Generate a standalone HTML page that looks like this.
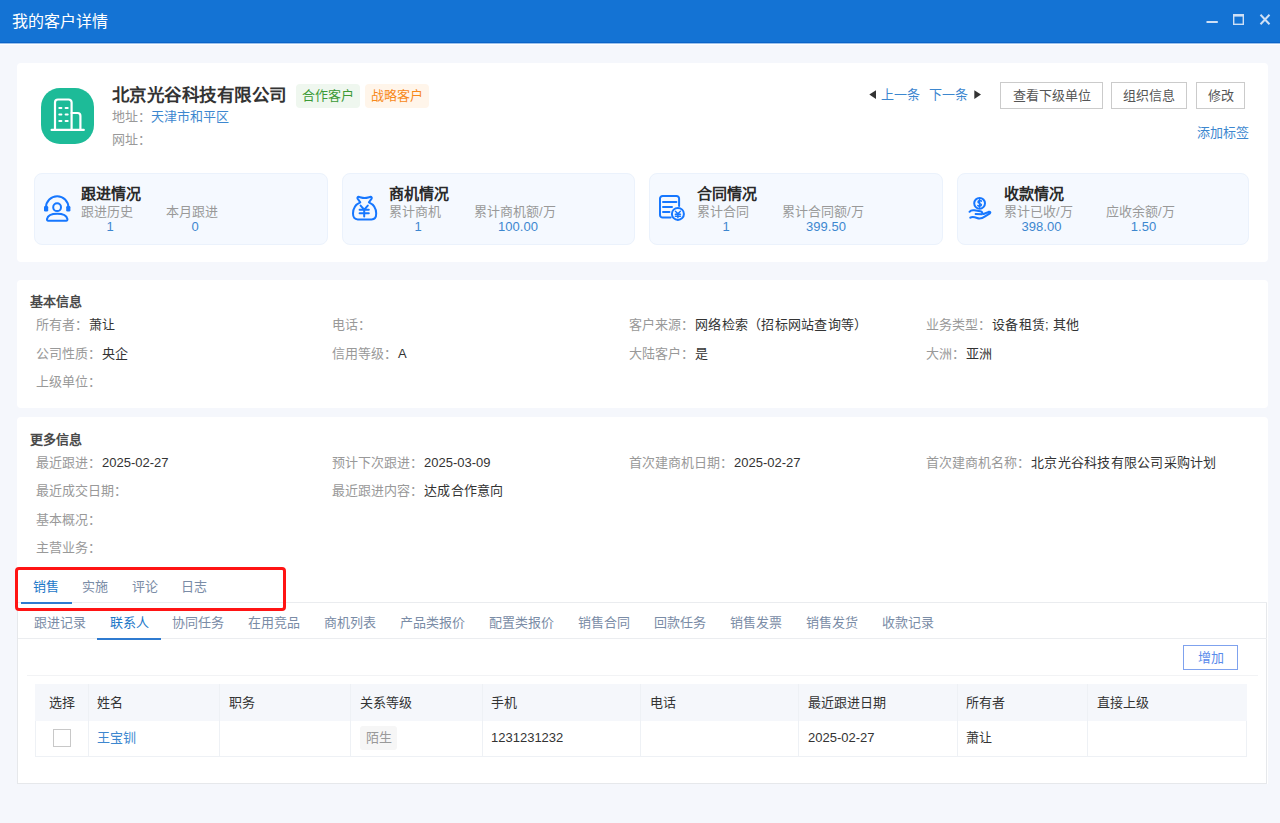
<!DOCTYPE html>
<html lang="zh-CN"><head><meta charset="utf-8">
<style>
*{margin:0;padding:0;box-sizing:border-box;}
html,body{width:1280px;height:823px;overflow:hidden;background:#F5F7FC;font-family:"Liberation Sans",sans-serif;color:#333;}
.a{position:absolute;white-space:nowrap;}
.hdr{position:absolute;left:0;top:0;width:1280px;height:43px;background:#1473D4;border-bottom:1px solid #0A64C8;}
.hdr .t{position:absolute;left:12px;top:12px;font-size:16px;color:#fff;line-height:20px;}
.card{position:absolute;background:#fff;border-radius:4px;}
.stat{position:absolute;top:173px;width:293px;height:72px;background:#F5F9FF;border:1px solid #EBF2FC;border-radius:8px;}
.stat .tt{position:absolute;left:46px;top:10px;font-size:15px;font-weight:bold;color:#2a2a2a;line-height:20px;}
.stat .lb{position:absolute;top:30px;font-size:13px;color:#999;line-height:16px;}
.stat .vl{position:absolute;top:45px;font-size:13px;color:#3D87CF;line-height:16px;text-align:center;}
.stat svg{position:absolute;left:9px;top:21px;overflow:visible;}
.btn{position:absolute;top:82px;height:27px;border:1px solid #CBCBCB;background:#fff;font-size:13px;color:#555;line-height:25px;text-align:center;}
.sec{position:absolute;left:30px;font-size:13px;font-weight:bold;color:#4a4a4a;line-height:16px;}
.f{position:absolute;font-size:13px;line-height:16px;color:#999;white-space:nowrap;}
.f b{font-weight:normal;color:#333;margin-left:1px;letter-spacing:0.25px;}
.f b.d{letter-spacing:0;}
.tab1{position:absolute;top:579px;font-size:13px;color:#7A8CA6;line-height:16px;}
.tab2{position:absolute;top:615px;font-size:13px;color:#7A8CA6;line-height:16px;}
.th{position:absolute;top:695px;font-size:13px;color:#333;line-height:16px;}
.td{position:absolute;top:730px;font-size:13px;color:#333;line-height:16px;}
</style></head>
<body>
<div class="hdr"><div class="t">我的客户详情</div>
<svg class="a" style="left:1200px;top:10px" width="80" height="22" viewBox="0 0 80 22">
<rect x="6.5" y="11" width="11.3" height="2" fill="#CFE0F5"/>
<rect x="33.7" y="4.7" width="9.6" height="9.6" fill="none" stroke="#CFE0F5" stroke-width="1.4"/>
<rect x="33" y="4" width="11" height="2.6" fill="#CFE0F5"/>
<path d="M60.5 4.8 L69.5 14.2 M69.5 4.8 L60.5 14.2" stroke="#CFE0F5" stroke-width="2" fill="none"/>
</svg>
</div>
<div style="position:absolute;left:0;top:43px;width:1280px;height:1px;background:#9DC2EC"></div><div style="position:absolute;left:0;top:44px;width:1280px;height:1px;background:#fff"></div>

<!-- card 1 -->
<div class="card" style="left:17px;top:63px;width:1251px;height:199px;"></div>
<svg class="a" style="left:41px;top:88px" width="53" height="56" viewBox="0 0 53 56">
<rect x="0" y="0" width="53" height="56" rx="19" fill="#1DBB98"/>
<g stroke="#fff" stroke-width="2.2" fill="none" stroke-linecap="round" stroke-linejoin="round">
<path d="M14 41.5 V14.5 a3 3 0 0 1 3 -3 H27.6 a3 3 0 0 1 3 3 V41.5"/>
<path d="M30.6 25 H36.6 a2.8 2.8 0 0 1 2.8 2.8 V41.5"/>
<path d="M10.6 41.9 H42.8"/>
<path d="M18.3 20 H20.4 M24.6 20 H26.7 M18.3 26.4 H20.4 M24.6 26.4 H26.7 M18.3 32.9 H20.4 M24.6 32.9 H26.7" stroke-width="2"/>
</g>
</svg>
<div class="a" style="left:112px;top:84px;font-size:17.5px;letter-spacing:0.45px;font-weight:bold;color:#333;line-height:22px;">北京光谷科技有限公司</div>
<div class="a" style="left:296px;top:84px;width:64px;height:24px;background:#EFF7EF;border-radius:4px;font-size:13px;color:#3C9A36;line-height:24px;text-align:center;">合作客户</div>
<div class="a" style="left:365px;top:84px;width:64px;height:24px;background:#FFF5EA;border-radius:4px;font-size:13px;color:#F7891A;line-height:24px;text-align:center;">战略客户</div>
<div class="f" style="left:112px;top:109px;">地址：<span style="color:#3D87CF">天津市和平区</span></div>
<div class="f" style="left:112px;top:132px;">网址：</div>

<svg class="a" style="left:869px;top:90px" width="8" height="10"><path d="M0.3 4.6 L7 0.3 V9Z" fill="#333"/></svg>
<div class="a" style="left:881px;top:87px;font-size:13px;color:#3D87CF;line-height:16px;">上一条</div>
<div class="a" style="left:929px;top:87px;font-size:13px;color:#3D87CF;line-height:16px;">下一条</div>
<svg class="a" style="left:974px;top:90px" width="8" height="10"><path d="M7 4.6 L0.3 0.3 V9Z" fill="#333"/></svg>
<div class="btn" style="left:1000px;width:103px;">查看下级单位</div>
<div class="btn" style="left:1111px;width:76px;">组织信息</div>
<div class="btn" style="left:1196px;width:49px;">修改</div>
<div class="a" style="left:1197px;top:125px;font-size:13px;color:#3D87CF;line-height:16px;">添加标签</div>

<div class="stat" style="left:34px;width:294px;">
<svg width="28" height="28" viewBox="0 0 28 28"><g fill="none" stroke="#1677FF" stroke-width="2" stroke-linecap="round" stroke-linejoin="round">
<path d="M2 12.5 A11.2 11.2 0 0 1 24.4 12.5"/>
<rect x="0" y="11" width="4.2" height="5.6" rx="1.3" fill="#1677FF" stroke="none"/><rect x="22.2" y="11" width="4.2" height="5.6" rx="1.3" fill="#1677FF" stroke="none"/>
<circle cx="13.1" cy="12.2" r="3.9"/>
<path d="M4.2 25.7 C3.2 25.7 2.8 25 3 24 C3.8 20.6 7.5 18.8 13.2 18.8 C18.9 18.8 22.6 20.6 23.4 24 C23.6 25 23.2 25.7 22.2 25.7 Z"/></g></svg>
<div class="tt">跟进情况</div>
<div class="lb" style="left:46px;">跟进历史</div><div class="lb" style="left:131px;">本月跟进</div>
<div class="vl" style="left:49px;width:52px;">1</div><div class="vl" style="left:134px;width:52px;">0</div>
</div>
<div class="stat" style="left:342px;">
<svg width="28" height="28" viewBox="0 0 28 28"><g fill="none" stroke="#1677FF" stroke-width="2" stroke-linejoin="round" stroke-linecap="round">
<path d="M8.3 7.3 L5.6 3.6 C5.1 2.8 5.6 1.8 6.6 1.8 C9 2.4 10.8 3 12.6 3 C14.4 3 16.2 2.4 18.6 1.8 C19.6 1.8 20.1 2.8 19.6 3.6 L16.9 7.3 C21.5 9.3 24.2 13.5 24.2 18.5 C24.2 22.5 22.5 24.4 19.5 24.4 H5.7 C2.7 24.4 1 22.5 1 18.5 C1 13.5 3.7 9.3 8.3 7.3 Z"/>
<path d="M8.6 10.6 L12.2 14.6 L15.8 10.6 M7.6 14.8 H16.8 M7.6 18.2 H16.8 M12.2 14.6 V21.6" stroke-width="2"/></g></svg>
<div class="tt">商机情况</div>
<div class="lb" style="left:46px;">累计商机</div><div class="lb" style="left:131px;">累计商机额/万</div>
<div class="vl" style="left:49px;width:52px;">1</div><div class="vl" style="left:134px;width:82px;">100.00</div>
</div>
<div class="stat" style="left:649px;width:294px;">
<svg style="left:10px" width="28" height="28" viewBox="0 0 28 28"><g fill="none" stroke="#1677FF" stroke-width="2" stroke-linecap="round" stroke-linejoin="round">
<path d="M10.6 22.6 H2.6 a2.6 2.6 0 0 1 -2.6 -2.6 V3.6 a2.6 2.6 0 0 1 2.6 -2.6 H16.5 a2.6 2.6 0 0 1 2.6 2.6 V10.9"/>
<path d="M3 6.9 H16.4 M3 12 H12 M3 16.9 H9.5"/>
<circle cx="17.9" cy="18.9" r="6"/>
<path d="M15.4 16.2 L17.9 18.8 L20.4 16.2 M15.3 19.3 H20.5 M15.3 21.2 H20.5 M17.9 18.8 V22.8" stroke-width="1.4"/></g></svg>
<div class="tt" style="left:47px">合同情况</div>
<div class="lb" style="left:47px;">累计合同</div><div class="lb" style="left:132px;">累计合同额/万</div>
<div class="vl" style="left:50px;width:52px;">1</div><div class="vl" style="left:135px;width:82px;">399.50</div>
</div>
<div class="stat" style="left:957px;width:292px;">
<svg width="28" height="28" viewBox="0 0 28 28"><g fill="none" stroke="#1677FF" stroke-width="2" stroke-linecap="round" stroke-linejoin="round">
<g transform="translate(1.1 0.8)"><circle cx="11.5" cy="7.5" r="5.4"/>
<path d="M13.3 5.3 C12.6 4.5 9.9 4.4 9.9 6.2 C9.9 7.9 13.3 7.3 13.3 9 C13.3 10.7 10.5 10.7 9.7 9.8 M11.5 3.6 V11.4" stroke-width="1.5"/>
<path d="M1.4 16 C2.5 14.6 4.2 14.2 6.2 14.5 L12.2 15.5 C14 15.8 15 17.4 13.8 18.4 L7.5 18.3"/>
<path d="M2.2 21.8 C4 20.6 6 21 9 22.2 C11.5 23.2 13.8 22.8 17 20.6 L21.8 17.6 C22.8 16.8 22 15.6 20.6 16 L15.5 18.2"/></g></g></svg>
<div class="tt">收款情况</div>
<div class="lb" style="left:46px;">累计已收/万</div><div class="lb" style="left:148px;">应收余额/万</div>
<div class="vl" style="left:49px;width:69px;">398.00</div><div class="vl" style="left:151px;width:69px;">1.50</div>
</div>

<!-- card 2 -->
<div class="card" style="left:17px;top:280px;width:1251px;height:128px;"></div>
<div class="sec" style="top:294px;">基本信息</div>
<div class="f" style="left:36px;top:317px;">所有者：<b>萧让</b></div>
<div class="f" style="left:332px;top:317px;">电话：</div>
<div class="f" style="left:629px;top:317px;">客户来源：<b>网络检索（招标网站查询等）</b></div>
<div class="f" style="left:926px;top:317px;">业务类型：<b>设备租赁; 其他</b></div>
<div class="f" style="left:36px;top:346px;">公司性质：<b>央企</b></div>
<div class="f" style="left:332px;top:346px;">信用等级：<b>A</b></div>
<div class="f" style="left:629px;top:346px;">大陆客户：<b>是</b></div>
<div class="f" style="left:926px;top:346px;">大洲：<b>亚洲</b></div>
<div class="f" style="left:36px;top:374px;">上级单位：</div>

<!-- card 3 -->
<div class="card" style="left:17px;top:417px;width:1251px;height:367px;border-radius:4px 4px 0 0;"></div>
<div class="sec" style="top:432px;">更多信息</div>
<div class="f" style="left:36px;top:455px;">最近跟进：<b class="d">2025-02-27</b></div>
<div class="f" style="left:332px;top:455px;">预计下次跟进：<b class="d">2025-03-09</b></div>
<div class="f" style="left:629px;top:455px;">首次建商机日期：<b class="d">2025-02-27</b></div>
<div class="f" style="left:926px;top:455px;">首次建商机名称：<b>北京光谷科技有限公司采购计划</b></div>
<div class="f" style="left:36px;top:483px;">最近成交日期：</div>
<div class="f" style="left:332px;top:483px;">最近跟进内容：<b>达成合作意向</b></div>
<div class="f" style="left:36px;top:512px;">基本概况：</div>
<div class="f" style="left:36px;top:540px;">主营业务：</div>

<!-- tabs -->
<div class="tab1" style="left:33px;color:#1D78C8;">销售</div>
<div class="tab1" style="left:82px;">实施</div>
<div class="tab1" style="left:132px;">评论</div>
<div class="tab1" style="left:181px;">日志</div>

<!-- inner box -->
<div class="a" style="left:17px;top:603px;width:1250px;height:181px;border:1px solid #E6E8EB;border-top:none;background:#fff;"></div>
<div class="a" style="left:18px;top:638px;width:1249px;height:1px;background:#EBEDF0"></div>
<div class="a" style="left:17px;top:602px;width:1250px;height:1px;background:#EAECEF"></div>
<div class="a" style="left:21px;top:602px;width:51px;height:2px;background:#2F7BD0"></div>
<div class="a" style="left:97px;top:638px;width:64px;height:2px;background:#2F7BD0"></div>
<div class="tab2" style="left:34px;">跟进记录</div>
<div class="tab2" style="left:110px;color:#1D78C8;">联系人</div>
<div class="tab2" style="left:172px;">协同任务</div>
<div class="tab2" style="left:248px;">在用竞品</div>
<div class="tab2" style="left:324px;">商机列表</div>
<div class="tab2" style="left:400px;">产品类报价</div>
<div class="tab2" style="left:489px;">配置类报价</div>
<div class="tab2" style="left:578px;">销售合同</div>
<div class="tab2" style="left:654px;">回款任务</div>
<div class="tab2" style="left:730px;">销售发票</div>
<div class="tab2" style="left:806px;">销售发货</div>
<div class="tab2" style="left:882px;">收款记录</div>

<div class="a" style="left:1183px;top:645px;width:55px;height:25px;border:1px solid #7FA2EE;font-size:13px;color:#5A8BEB;line-height:23px;text-align:center;">增加</div>
<div class="a" style="left:27px;top:675px;width:1231px;height:1px;background:#F2F3F5"></div>

<div class="a" style="left:35px;top:684px;width:1212px;height:37px;background:#F5F7FB;"></div>
<div class="a" style="left:35px;top:721px;width:1212px;height:36px;border:1px solid #EEF1F5;border-top:none;"></div>
<div class="a" style="left:88px;top:684px;width:1px;height:73px;background:#EEF1F5"></div>
<div class="a" style="left:219px;top:684px;width:1px;height:73px;background:#EEF1F5"></div>
<div class="a" style="left:350px;top:684px;width:1px;height:73px;background:#EEF1F5"></div>
<div class="a" style="left:482px;top:684px;width:1px;height:73px;background:#EEF1F5"></div>
<div class="a" style="left:640px;top:684px;width:1px;height:73px;background:#EEF1F5"></div>
<div class="a" style="left:798px;top:684px;width:1px;height:73px;background:#EEF1F5"></div>
<div class="a" style="left:957px;top:684px;width:1px;height:73px;background:#EEF1F5"></div>
<div class="a" style="left:1087px;top:684px;width:1px;height:73px;background:#EEF1F5"></div>
<div class="a" style="left:53px;top:729px;width:18px;height:18px;border:1px solid #C8C8C8;background:#fff;"></div>
<div class="td" style="left:97px;color:#3D87CF;">王宝钏</div>
<div class="a" style="left:360px;top:726px;width:37px;height:24px;background:#F6F6F6;border-radius:3px;font-size:13px;color:#999;line-height:24px;text-align:center;">陌生</div>
<div class="td" style="left:491px;">1231231232</div>
<div class="td" style="left:808px;">2025-02-27</div>
<div class="td" style="left:966px;">萧让</div>
<div class="th" style="left:49px;">选择</div>
<div class="th" style="left:97px;">姓名</div>
<div class="th" style="left:229px;">职务</div>
<div class="th" style="left:360px;">关系等级</div>
<div class="th" style="left:491px;">手机</div>
<div class="th" style="left:650px;">电话</div>
<div class="th" style="left:808px;">最近跟进日期</div>
<div class="th" style="left:966px;">所有者</div>
<div class="th" style="left:1097px;">直接上级</div>
<div class="a" style="left:15px;top:567px;width:271px;height:44px;border:3px solid #FF1414;border-radius:4px;"></div>
</body></html>
